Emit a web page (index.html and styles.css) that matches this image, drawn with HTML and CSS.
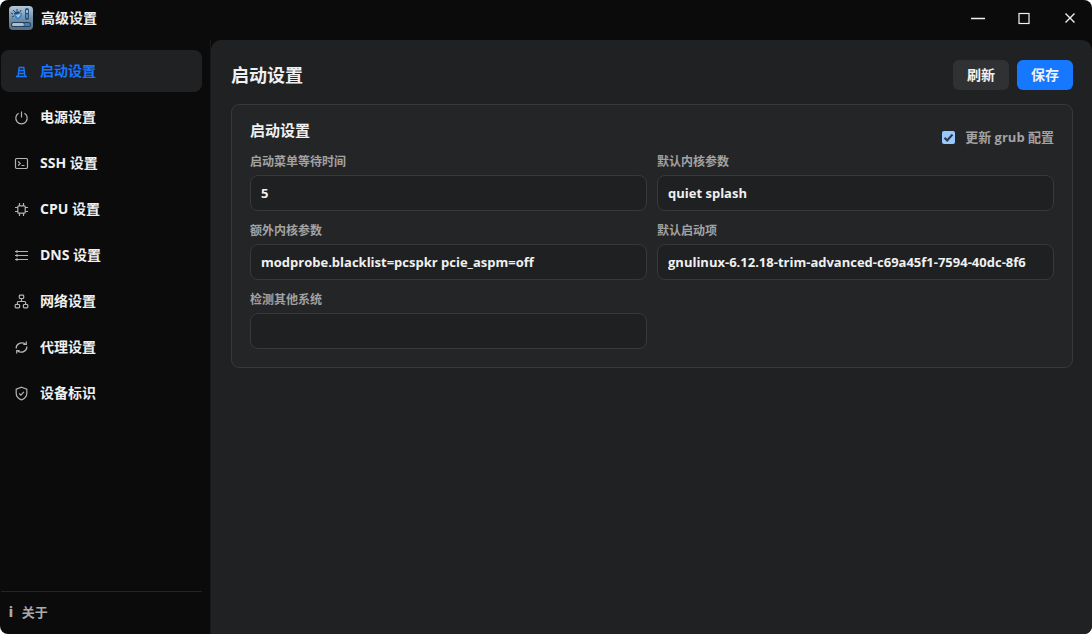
FILE: index.html
```html
<!DOCTYPE html>
<html lang="zh-CN">
<head>
<meta charset="utf-8">
<title>高级设置</title>
<link rel="stylesheet" href="styles.css">
</head>
<body>
<div class="window">
  <header class="titlebar">
    <svg class="app-icon" viewBox="0 0 24 24" aria-hidden="true">
      <defs>
        <linearGradient id="tile" x1="0" y1="0" x2="0" y2="1">
          <stop offset="0" stop-color="#b4c9d9"/>
          <stop offset=".5" stop-color="#7592ac"/>
          <stop offset="1" stop-color="#526d86"/>
        </linearGradient>
      </defs>
      <rect width="24" height="24" rx="4" fill="url(#tile)"/>
      <path d="M2 7l2 1M4 4l2 2M8 3v2M12 4l-1 2M3 11l2-1" stroke="#27435e" stroke-width="1"/>
      <path d="M5 8c1-3 5-3 6-1l-3 2z" fill="#233b54"/>
      <path d="M5 8l8-1v3l-4 4c-2-1-4-3-4-6z" fill="#3d83c4"/>
      <path d="M7 9l5-1-3 4z" fill="#a9d0ef"/>
      <rect x="16" y="2" width="4" height="12" rx="2" fill="#2a557e"/>
      <rect x="17" y="4" width="2" height="3" rx="1" fill="#a7cce8"/>
      <rect x="17" y="8" width="2" height="4" rx="1" fill="#4b90cd"/>
      <rect x="2" y="16" width="20" height="5" rx="2.500" fill="#253f58"/>
      <rect x="3" y="17" width="12" height="3" rx="1.500" fill="#b3bdc7"/>
      <rect x="15" y="17" width="6" height="3" rx="1.500" fill="#3c83c5"/>
    </svg>
    <span class="app-name">高级设置</span>
    <div class="window-controls">
      <button type="button" aria-label="最小化"><svg viewBox="0 0 14 14"><path d="M0 7.500h14" stroke-width="1.500"/></svg></button>
      <button type="button" aria-label="最大化"><svg viewBox="0 0 14 14"><rect x="2" y="2.500" width="10" height="10" stroke-width="1.200"/></svg></button>
      <button type="button" aria-label="关闭"><svg viewBox="0 0 14 14"><path d="M2.500 2.500l9 9M11.500 2.500l-9 9" stroke-width="1.400"/></svg></button>
    </div>
  </header>
  <div class="body">
    <aside class="sidebar">
      <nav class="nav">
        <a href="#boot" class="nav-item active" aria-current="page"><svg viewBox="0 0 15 15"><path d="M2 12.500h11M4 12.500l1.200-9h4.600l1.200 9M5 6.500h5M4.500 9.500h6"/></svg>启动设置</a>
        <a href="#power" class="nav-item"><svg viewBox="0 0 15 15"><path d="M7.500 1.500v6M4.600 3.200a5.700 5.700 0 1 0 5.800 0"/></svg>电源设置</a>
        <a href="#ssh" class="nav-item"><svg viewBox="0 0 15 15"><rect x="1.500" y="2.500" width="12" height="10" rx="1.200"/><path d="M4.200 5.500l2 2-2 2M7.500 9.500h3"/></svg>SSH 设置</a>
        <a href="#cpu" class="nav-item"><svg viewBox="0 0 15 15"><rect x="3.800" y="3.800" width="7.400" height="7.400" rx="1"/><path d="M5.500 1v3M9.500 1v3M5.500 11v3M9.500 11v3M1 5.500h3M1 9.500h3M11 5.500h3M11 9.500h3"/></svg>CPU 设置</a>
        <a href="#dns" class="nav-item"><svg viewBox="0 0 15 15"><path d="M1 3.500h13M1 7.500h13M1 11.500h13"/><path d="M3 2.500v2M3 6.500v2M3 10.500v2" stroke-width="2"/></svg>DNS 设置</a>
        <a href="#network" class="nav-item"><svg viewBox="0 0 15 15"><rect x="5.300" y="1.100" width="4.400" height="3.400" rx=".8"/><rect x="1.200" y="10.500" width="4.400" height="3.400" rx=".8"/><rect x="9.400" y="10.500" width="4.400" height="3.400" rx=".8"/><path d="M7.500 4.500v3M3.400 10.500V8.500q0-1 1-1h6.200q1 0 1 1v2"/></svg>网络设置</a>
        <a href="#proxy" class="nav-item"><svg viewBox="0 0 15 15"><path d="M2.200 8.500C1.800 4.500 6.800 1 11.500 4M12.800 6.500c.4 4-4.600 7.500-9.300 4.500"/><path d="M12.300 1.500v3h-3M2.700 13.500v-3h3"/></svg>代理设置</a>
        <a href="#device" class="nav-item"><svg viewBox="0 0 15 15"><path d="M7.500 1.200l5.300 2v4.200c0 3-2 5-5.300 6.500-3.300-1.500-5.300-3.500-5.300-6.500V3.200z"/><path d="M5.200 7.500l1.700 1.700 3-3.300"/></svg>设备标识</a>
      </nav>
      <a href="#about" class="about"><b>i</b>关于</a>
    </aside>
    <main class="main">
      <div class="page-head">
        <h1>启动设置</h1>
        <div class="actions">
          <button type="button" class="btn">刷新</button>
          <button type="submit" form="boot-form" class="btn primary">保存</button>
        </div>
      </div>
      <form class="card" id="boot-form">
        <div class="card-head">
          <h2>启动设置</h2>
          <label class="check"><input type="checkbox" checked>更新 grub 配置</label>
        </div>
        <div class="fields">
          <div class="field"><label for="timeout">启动菜单等待时间</label><input id="timeout" type="text" value="5"></div>
          <div class="field"><label for="params">默认内核参数</label><input id="params" type="text" value="quiet splash"></div>
          <div class="field"><label for="extra">额外内核参数</label><input id="extra" type="text" value="modprobe.blacklist=pcspkr pcie_aspm=off"></div>
          <div class="field"><label for="entry">默认启动项</label><input id="entry" type="text" value="gnulinux-6.12.18-trim-advanced-c69a45f1-7594-40dc-8f6"></div>
          <div class="field"><label for="prober">检测其他系统</label><input id="prober" type="text"></div>
        </div>
      </form>
    </main>
  </div>
</div>
</body>
</html>
```
FILE: styles.css
```css
* { box-sizing: border-box; }
body {
  margin: 0;
  background: #fff;
  color: #f0f0f0;
  font: 700 14px/20px "Open Sans", "Noto Sans CJK SC", sans-serif;
}
button, input { font: inherit; color: inherit; }
svg { fill: none; stroke: currentColor; }
h1, h2 { margin: 0; }
.window {
  display: flex;
  flex-direction: column;
  min-height: 100vh;
  background: #0b0b0b;
  border-radius: 8px;
  overflow: hidden;
}
.titlebar {
  display: flex;
  align-items: center;
  height: 40px;
  padding: 0 0 4px 9px;
  gap: 8px;
}
.app-icon { width: 24px; height: 24px; stroke: none; }
.window-controls { display: flex; margin-left: auto; margin-right: -1px; }
.window-controls button {
  display: grid;
  place-items: center;
  width: 46px;
  height: 36px;
  padding: 0;
  border: 0;
  background: none;
}
.window-controls svg { width: 14px; height: 14px; }
.body { display: flex; flex: 1; }
.sidebar {
  display: flex;
  flex-direction: column;
  flex: 0 0 211px;
  padding: 10px 8px 0 1px;
  border-right: 1px solid #1a1a1b;
}
.nav { display: grid; gap: 4px; }
.nav-item {
  display: flex;
  align-items: center;
  gap: 11px;
  height: 42px;
  padding-left: 13px;
  border-radius: 8px;
  color: inherit;
  text-decoration: none;
}
.nav-item svg { width: 15px; height: 15px; color: #b4b4b4; stroke-width: 1.2; }
.nav-item.active { background: #202123; color: #1677ff; }
.nav-item.active svg { color: inherit; stroke-width: 1.4; }
.about {
  display: flex;
  gap: 9px;
  margin-top: auto;
  padding: 10px 8px 12px;
  border-top: 1px solid #252525;
  color: #aaa;
  font-size: 13px;
  text-decoration: none;
}
.about b { font-family: Inter, sans-serif; }
.main {
  flex: 1;
  min-width: 0;
  padding: 20px 19px 20px 20px;
  background: #202123;
  border-radius: 10px 10px 0 0;
}
.page-head { display: flex; align-items: center; justify-content: space-between; margin-bottom: 14px; }
.page-head h1 { font-size: 18px; line-height: 30px; }
.actions { display: flex; gap: 8px; }
.btn {
  width: 56px;
  height: 30px;
  padding: 0;
  border: 0;
  border-radius: 6px;
  background: #303133;
}
.btn.primary { background: #1677ff; }
.card {
  padding: 14px 18px 18px;
  border: 1px solid #38393b;
  border-radius: 8px;
  background: #242527;
}
.card-head { display: flex; justify-content: space-between; padding-bottom: 5px; }
.card-head h2 { font-size: 15px; line-height: 22px; }
.check { display: flex; align-items: center; gap: 10px; padding-top: 8px; color: #a2a2a2; font-size: 13px; }
.check input {
  appearance: none;
  width: 13px;
  height: 13px;
  margin: 0;
  border-radius: 2px;
  background: #99c8ff url("data:image/svg+xml,%3Csvg xmlns='http://www.w3.org/2000/svg' viewBox='0 0 13 13'%3E%3Cpath d='M2.500 6.800l2.700 2.700 5.300-6' fill='none' stroke='%23303940' stroke-width='2'/%3E%3C/svg%3E");
}
.check input:not(:checked) { background: #202123; }
.fields { display: grid; grid-template-columns: repeat(2, minmax(0, 1fr)); gap: 10px; }
.field { display: grid; gap: 4px; }
.field label { color: #a2a2a2; font-size: 12px; line-height: 19px; }
.field input {
  width: 100%;
  height: 36px;
  padding: 0 10px;
  border: 1px solid #38393b;
  border-radius: 8px;
  background: #1f2022;
  font-size: 13px;
}
```
